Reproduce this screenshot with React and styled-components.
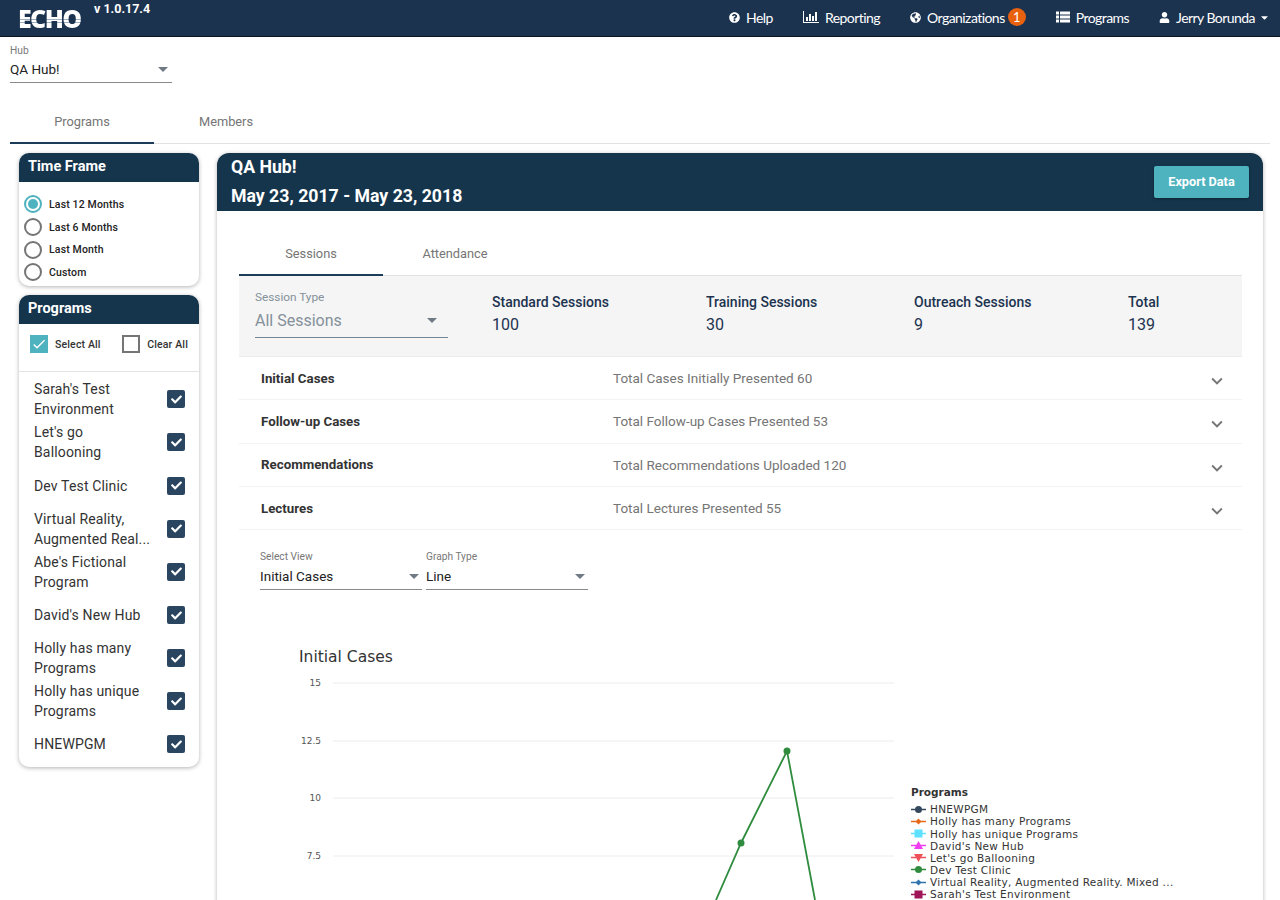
import React from "react";
import styled, { createGlobalStyle } from "styled-components";
import { FaQuestionCircle, FaGlobeAmericas, FaUser, FaCaretDown, FaCheck } from "react-icons/fa";
import { MdArrowDropDown, MdCheck, MdExpandMore } from "react-icons/md";

const GlobalStyle = createGlobalStyle`
  html, body {
    margin: 0;
    padding: 0;
    height: 900px;
    overflow: hidden;
    background: #fff;
    font-family: Roboto, "Liberation Sans", sans-serif;
  }
  * { box-sizing: border-box; }
`;

const Page = styled.div`
  width: 1280px;
  height: 900px;
  overflow: hidden;
`;

const TopBar = styled.header`
  height: 37px;
  background: #1c3350;
  border-bottom: 1px solid #0b1520;
  display: flex;
  justify-content: space-between;
  color: #fff;
`;

const Brand = styled.div`
  display: flex;
  align-items: flex-start;
  padding-left: 18px;
`;

const Logo = styled.span`
  font-family: "Open Sans", sans-serif;
  font-weight: 800;
  font-size: 25px;
  line-height: 24px;
  letter-spacing: -1.6px;
  margin-top: 6px;
  width: 76px;
  height: 24px;
  background: linear-gradient(
    #fff 0 13px,
    #9fb0c0 13px 14px,
    #fff 14px 16px,
    #9fb0c0 16px 17px,
    #fff 17px
  );
  -webkit-background-clip: text;
  background-clip: text;
  color: transparent;
`;

const Version = styled.span`
  font-weight: 700;
  font-size: 12.5px;
  line-height: 14px;
  margin-top: 2px;
`;

const Nav = styled.nav`
  display: flex;
  align-items: center;
  padding: 0 10px 2px 0;
  font-family: Lato, sans-serif;
  font-size: 14px;
`;

const NavItem = styled.a`
  display: flex;
  align-items: center;
  gap: 6px;
  margin-left: ${(p) => p.$gap}px;
  letter-spacing: -0.55px;
  svg { font-size: 11px; flex-shrink: 0; }
`;

const NavCaret = styled(FaCaretDown)`
  margin-left: -2px;
`;

const Badge = styled.span`
  width: 18px;
  height: 18px;
  border-radius: 50%;
  background: #e8610f;
  display: flex;
  align-items: center;
  justify-content: center;
  font-size: 13px;
  margin-left: 3px;
`;

const FieldBox = styled.div`
  width: ${(p) => p.$width}px;
  margin-right: ${(p) => p.$after || 0}px;
  flex-shrink: 0;
`;

const FieldLabel = styled.div`
  font-size: ${(p) => p.$size || 10.2}px;
  line-height: 12px;
  color: ${(p) => p.$color || "#777"};
`;

const FieldValue = styled.div`
  display: flex;
  justify-content: space-between;
  align-items: center;
  height: ${(p) => p.$height || 26}px;
  padding-bottom: ${(p) => p.$lift || 0}px;
  border-bottom: 1px solid ${(p) => p.$line || "#8a8a8a"};
  font-size: ${(p) => p.$size || 13.5}px;
  color: ${(p) => p.$color || "#222"};
  svg {
    font-size: 24px;
    color: #6f7a84;
    margin-right: ${(p) => p.$arrow}px;
  }
`;

const HubRow = styled.div`
  padding: 8px 0 0 10px;
  height: 64px;
`;

const TabBar = styled.div`
  display: flex;
  height: 43px;
  margin: ${(p) => p.$margin};
  border-bottom: 1px solid #e2e2e2;
`;

const Tab = styled.div`
  width: 144px;
  display: flex;
  align-items: center;
  justify-content: center;
  font-size: 12.8px;
  color: #757575;
  margin-bottom: -1px;
  border-bottom: 2px solid ${(p) => (p.$active ? "#1c3d5a" : "transparent")};
`;

const Content = styled.div`
  display: flex;
  align-items: flex-start;
  gap: 18px;
  padding: 9px 17px 0 19px;
`;

const Sidebar = styled.aside`
  width: 180px;
  flex-shrink: 0;
  display: flex;
  flex-direction: column;
  gap: 9px;
`;

const Card = styled.section`
  background: #fff;
  border-radius: 10px;
  box-shadow: 0 1px 4px rgba(0, 0, 0, 0.3);
`;

const CardHead = styled.h3`
  margin: 0;
  height: 29px;
  background: #15354d;
  color: #fff;
  font-size: 14.5px;
  font-weight: 700;
  line-height: 28px;
  padding-left: 9px;
  border-radius: 10px 10px 0 0;
`;

const RadioList = styled.div`
  padding: 11px 0 2px 5px;
`;

const RadioRow = styled.label`
  display: flex;
  align-items: center;
  gap: 7px;
  height: 22.7px;
  font-size: 10.5px;
  font-weight: 500;
  letter-spacing: 0.15px;
  color: #222;
`;

const RadioMark = styled.span`
  width: 18px;
  height: 18px;
  border-radius: 50%;
  border: 2px solid ${(p) => (p.$on ? "#4fb3bf" : "#757575")};
  display: flex;
  align-items: center;
  justify-content: center;
  &::after {
    content: "";
    width: 10px;
    height: 10px;
    border-radius: 50%;
    background: ${(p) => (p.$on ? "#4fb3bf" : "transparent")};
  }
`;

const BulkRow = styled.div`
  display: flex;
  justify-content: space-between;
  align-items: center;
  height: 48px;
  padding: 0 11px 6px 11px;
  border-bottom: 1px solid #e4e4e4;
`;

const BulkItem = styled.label`
  display: flex;
  align-items: center;
  gap: 7px;
  font-size: 10.5px;
  font-weight: 500;
  letter-spacing: 0.15px;
  color: #333;
`;

const Box = styled.span`
  width: 18px;
  height: 18px;
  display: flex;
  align-items: center;
  justify-content: center;
  color: #fff;
  font-size: 16px;
  background: ${(p) => p.$bg || "transparent"};
  border: ${(p) => (p.$empty ? "2px solid #757575" : "none")};
  border-radius: ${(p) => (p.$radius ? 2 : 0)}px;
`;

const ProgramCheck = styled(FaCheck)`
  font-size: 11px;
`;

const ProgramList = styled.div`
  padding: 6px 14px 1px 15px;
`;

const ProgramRow = styled.label`
  display: flex;
  align-items: center;
  justify-content: space-between;
  height: 43.15px;
`;

const ProgramName = styled.span`
  width: 118px;
  font-size: 14px;
  line-height: 20px;
  letter-spacing: 0.15px;
  color: #333;
`;

const Panel = styled.main`
  flex: 1;
  background: #fff;
  border-radius: 12px 12px 0 0;
  box-shadow: 0 1px 4px rgba(0, 0, 0, 0.3);
  height: 800px;
`;

const PanelHead = styled.div`
  height: 58px;
  background: #15354d;
  border-radius: 12px 12px 0 0;
  color: #fff;
  display: flex;
  justify-content: space-between;
  align-items: center;
  padding: 0 14px;
`;

const PanelTitle = styled.div`
  font-size: 17.7px;
  font-weight: 700;
  line-height: 29px;
`;

const ExportButton = styled.button`
  width: 95px;
  height: 32px;
  padding: 0 0 2px;
  border: 0;
  border-radius: 2px;
  background: #4fb3bf;
  color: #fff;
  font-family: Roboto, sans-serif;
  font-size: 12.7px;
  font-weight: 700;
  box-shadow: 0 1px 3px rgba(0, 0, 0, 0.35);
`;

const PanelBody = styled.div`
  padding: 22px 21px 0 22px;
`;

const SummaryBar = styled.div`
  height: 81px;
  background: #f5f5f5;
  border-bottom: 1px solid #ececec;
  display: flex;
  align-items: flex-start;
  padding: 15px 0 0 16px;
`;

const Stat = styled.div`
  width: ${(p) => p.$width}px;
  padding-top: 3px;
`;

const StatLabel = styled.div`
  font-size: 14px;
  font-weight: 500;
  line-height: 16px;
  color: #1c3350;
`;

const StatValue = styled.div`
  font-size: 16px;
  line-height: 20px;
  margin-top: 5px;
  color: #1c3350;
`;

const CaseRow = styled.div`
  display: flex;
  align-items: center;
  height: 43.3px;
  padding: 0 14px 0 22px;
  border-bottom: 1px solid #f3f3f3;
`;

const CaseName = styled.div`
  width: 352px;
  font-size: 13.3px;
  font-weight: 700;
  color: #333;
`;

const CaseText = styled.div`
  flex: 1;
  font-size: 13.5px;
  color: #757575;
`;

const ExpandIcon = styled(MdExpandMore)`
  font-size: 22px;
  color: #757575;
  margin-top: 6px;
`;

const ViewRow = styled.div`
  display: flex;
  gap: 4px;
  padding: 21px 0 0 21px;
`;

const ChartRow = styled.div`
  display: flex;
  margin: 57px 0 0 21px;
`;

const Plot = styled.div`
  width: 640px;
  flex-shrink: 0;
`;

const ChartTitle = styled.div`
  font-family: "DejaVu Sans", sans-serif;
  font-size: 15.5px;
  line-height: 20px;
  height: 26px;
  color: #333;
  padding-left: 39px;
`;

const Legend = styled.div`
  padding-top: 138px;
  margin-left: 11px;
  font-family: "DejaVu Sans", sans-serif;
  color: #333;
`;

const LegendTitle = styled.div`
  font-size: 10.5px;
  font-weight: 700;
  line-height: 14px;
  margin-bottom: 4px;
`;

const LegendRow = styled.div`
  display: flex;
  align-items: center;
  gap: 4px;
  height: 12.15px;
  font-size: 10.5px;
  line-height: 12px;
  white-space: nowrap;
  letter-spacing: 0.3px;
`;

const AxisText = styled.text`
  font-family: "DejaVu Sans", sans-serif;
  font-size: 9px;
  fill: #555;
  text-anchor: end;
`;

const Radios = [
  ["Last 12 Months", true],
  ["Last 6 Months", false],
  ["Last Month", false],
  ["Custom", false],
];

const Programs = [
  "Sarah's Test Environment",
  "Let's go Ballooning",
  "Dev Test Clinic",
  "Virtual Reality, Augmented Real...",
  "Abe's Fictional Program",
  "David's New Hub",
  "Holly has many Programs",
  "Holly has unique Programs",
  "HNEWPGM",
];

const Stats = [
  ["Standard Sessions", "100", 214],
  ["Training Sessions", "30", 208],
  ["Outreach Sessions", "9", 214],
  ["Total", "139", 60],
];

const Cases = [
  ["Initial Cases", "Total Cases Initially Presented 60"],
  ["Follow-up Cases", "Total Follow-up Cases Presented 53"],
  ["Recommendations", "Total Recommendations Uploaded 120"],
  ["Lectures", "Total Lectures Presented 55"],
];

const Ticks = [
  ["15", 10],
  ["12.5", 68],
  ["10", 125],
  ["7.5", 183],
];

const LegendItems = [
  ["HNEWPGM", "#34495e", "circle"],
  ["Holly has many Programs", "#e8681a", "diamond"],
  ["Holly has unique Programs", "#5ee0ff", "square"],
  ["David's New Hub", "#f03cf0", "up"],
  ["Let's go Ballooning", "#f0505a", "down"],
  ["Dev Test Clinic", "#2f8c3f", "circle"],
  ["Virtual Reality, Augmented Reality. Mixed ...", "#2f74ad", "diamond"],
  ["Sarah's Test Environment", "#a01558", "square"],
];

const ReportIcon = () => (
  <svg width="16" height="12" viewBox="0 0 16 12" fill="#fff">
    <rect x="0" y="0" width="1" height="12" />
    <rect x="0" y="11" width="16" height="1" />
    <rect x="3" y="6" width="2" height="4" />
    <rect x="6" y="3" width="2" height="7" />
    <rect x="9" y="5" width="2" height="5" />
    <rect x="12" y="1" width="2" height="9" />
  </svg>
);

const ListIcon = () => (
  <svg width="14" height="12" viewBox="0 0 14 12" fill="#fff">
    <rect x="0" y="0.5" width="3" height="3" />
    <rect x="4" y="0.5" width="10" height="3" />
    <rect x="0" y="4.5" width="3" height="3" />
    <rect x="4" y="4.5" width="10" height="3" />
    <rect x="0" y="8.5" width="3" height="3" />
    <rect x="4" y="8.5" width="10" height="3" />
  </svg>
);

const Marker = ({ color, shape }) => (
  <svg width="15" height="9" viewBox="0 0 15 9">
    <line x1="0" y1="4.5" x2="15" y2="4.5" stroke={color} strokeWidth="1.5" />
    {shape === "circle" && <circle cx="7.5" cy="4.5" r="3.5" fill={color} />}
    {shape === "diamond" && <path d="M7.5 1.5 L10.5 4.5 L7.5 7.5 L4.5 4.5 Z" fill={color} />}
    {shape === "square" && <rect x="3.5" y="0.5" width="8" height="8" fill={color} />}
    {shape === "up" && <path d="M7.5 0 L12 8 L3 8 Z" fill={color} />}
    {shape === "down" && <path d="M3 1 L12 1 L7.5 9 Z" fill={color} />}
  </svg>
);

export default function App() {
  return (
    <Page>
      <GlobalStyle />
      <TopBar>
        <Brand>
          <Logo>ECHO</Logo>
          <Version>v 1.0.17.4</Version>
        </Brand>
        <Nav>
          <NavItem $gap={0}>
            <FaQuestionCircle />
            Help
          </NavItem>
          <NavItem $gap={30}>
            <ReportIcon />
            Reporting
          </NavItem>
          <NavItem $gap={30}>
            <FaGlobeAmericas />
            Organizations
          </NavItem>
          <Badge>1</Badge>
          <NavItem $gap={30}>
            <ListIcon />
            Programs
          </NavItem>
          <NavItem $gap={30}>
            <FaUser />
            Jerry Borunda
            <NavCaret />
          </NavItem>
        </Nav>
      </TopBar>

      <HubRow>
        <FieldBox $width={162}>
          <FieldLabel>Hub</FieldLabel>
          <FieldValue $arrow={-3} $lift={2}>
            QA Hub!
            <MdArrowDropDown />
          </FieldValue>
        </FieldBox>
      </HubRow>

      <TabBar $margin="0 10px">
        <Tab $active>Programs</Tab>
        <Tab>Members</Tab>
      </TabBar>

      <Content>
        <Sidebar>
          <Card>
            <CardHead>Time Frame</CardHead>
            <RadioList>
              {Radios.map(([label, on]) => (
                <RadioRow key={label}>
                  <RadioMark $on={on} />
                  {label}
                </RadioRow>
              ))}
            </RadioList>
          </Card>
          <Card>
            <CardHead>Programs</CardHead>
            <BulkRow>
              <BulkItem>
                <Box $bg="#4fb3bf">
                  <MdCheck />
                </Box>
                Select All
              </BulkItem>
              <BulkItem>
                <Box $empty />
                Clear All
              </BulkItem>
            </BulkRow>
            <ProgramList>
              {Programs.map((name) => (
                <ProgramRow key={name}>
                  <ProgramName>{name}</ProgramName>
                  <Box $bg="#2a4560" $radius>
                    <ProgramCheck />
                  </Box>
                </ProgramRow>
              ))}
            </ProgramList>
          </Card>
        </Sidebar>

        <Panel>
          <PanelHead>
            <PanelTitle>
              QA Hub!
              <br />
              May 23, 2017 - May 23, 2018
            </PanelTitle>
            <ExportButton>Export Data</ExportButton>
          </PanelHead>
          <PanelBody>
            <TabBar $margin="0">
              <Tab $active>Sessions</Tab>
              <Tab>Attendance</Tab>
            </TabBar>
            <SummaryBar>
              <FieldBox $width={193} $after={44}>
                <FieldLabel $size={11.8} $color="#84909a">Session Type</FieldLabel>
                <FieldValue $size={16} $height={35} $color="#84909a" $line="#6f8595" $arrow={4}>
                  All Sessions
                  <MdArrowDropDown />
                </FieldValue>
              </FieldBox>
              {Stats.map(([label, value, width]) => (
                <Stat key={label} $width={width}>
                  <StatLabel>{label}</StatLabel>
                  <StatValue>{value}</StatValue>
                </Stat>
              ))}
            </SummaryBar>
            {Cases.map(([name, text]) => (
              <CaseRow key={name}>
                <CaseName>{name}</CaseName>
                <CaseText>{text}</CaseText>
                <ExpandIcon />
              </CaseRow>
            ))}
            <ViewRow>
              <FieldBox $width={162}>
                <FieldLabel>Select View</FieldLabel>
                <FieldValue $height={27} $arrow={-4}>
                  Initial Cases
                  <MdArrowDropDown />
                </FieldValue>
              </FieldBox>
              <FieldBox $width={162}>
                <FieldLabel>Graph Type</FieldLabel>
                <FieldValue $height={27} $arrow={-4}>
                  Line
                  <MdArrowDropDown />
                </FieldValue>
              </FieldBox>
            </ViewRow>
            <ChartRow>
              <Plot>
                <ChartTitle>Initial Cases</ChartTitle>
                <svg width="640" height="240" viewBox="0 0 640 240">
                  {Ticks.map(([label, y]) => (
                    <g key={label}>
                      <line x1="73" x2="634" y1={y} y2={y} stroke="#ececec" />
                      <AxisText x="61" y={y + 3}>{label}</AxisText>
                    </g>
                  ))}
                  <polyline
                    points="456,227 481,170 527,78 555,227"
                    fill="none"
                    stroke="#2f8c3f"
                    strokeWidth="1.8"
                  />
                  <circle cx="481" cy="170" r="3.5" fill="#2f8c3f" />
                  <circle cx="527" cy="78" r="3.5" fill="#2f8c3f" />
                </svg>
              </Plot>
              <Legend>
                <LegendTitle>Programs</LegendTitle>
                {LegendItems.map(([name, color, shape]) => (
                  <LegendRow key={name}>
                    <Marker color={color} shape={shape} />
                    {name}
                  </LegendRow>
                ))}
              </Legend>
            </ChartRow>
          </PanelBody>
        </Panel>
      </Content>
    </Page>
  );
}
